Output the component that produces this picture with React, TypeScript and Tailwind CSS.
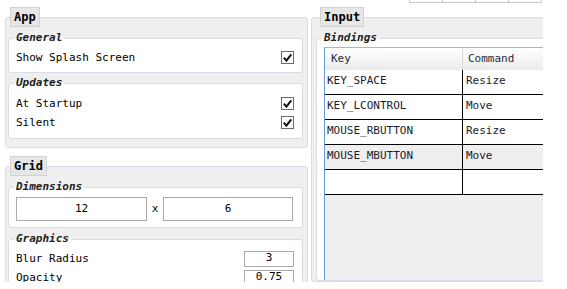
import type { ReactNode } from 'react';

const mono = "font-['DejaVu_Sans_Mono',monospace]";

function Check() {
  return (
    <svg width="13" height="13" viewBox="0 0 13 13" className="shrink-0">
      <rect x="0.5" y="0.5" width="12" height="12" fill="#fff" stroke="#6b6b6b" />
      <path d="M2.8 6.6 L5.4 9.6 L10.3 3.4" fill="none" stroke="#111" strokeWidth="2" />
    </svg>
  );
}

function Group({
  title,
  labelClass,
  className = '',
  boxClass = '',
  children,
}: {
  title: string;
  labelClass: string;
  className?: string;
  boxClass?: string;
  children: ReactNode;
}) {
  return (
    <div className={`relative pt-[10px] ${className}`}>
      <div className={`rounded-[3px] border border-[#d6dde5] bg-[#efefef] pt-[20px] ${boxClass}`}>
        {children}
      </div>
      {/* tab-like title over the border */}
      <span
        className={`absolute top-0 h-[20px] border border-[#d2d2d2] bg-[#e6e6e6] px-[3px] text-[12px] font-bold leading-[19px] text-black ${labelClass}`}
      >
        {title}
      </span>
    </div>
  );
}

function Section({
  title,
  className = '',
  children,
}: {
  title: string;
  className?: string;
  children: ReactNode;
}) {
  return (
    <div className={`relative rounded-[3px] border border-[#d6dde5] bg-white ${className}`}>
      <span className="absolute -top-[8px] left-[5px] bg-[linear-gradient(to_bottom,#efefef_50%,#ffffff_50%)] px-[2px] text-[11px] font-bold italic leading-[14px] text-[#222]">
        {title}
      </span>
      {children}
    </div>
  );
}

function Row({ label, children }: { label: string; children: ReactNode }) {
  return (
    <div className="flex h-[19px] items-center justify-between pl-[7px] pr-[8px] text-[11px] text-black">
      <span className="pt-[1px]">{label}</span>
      {children}
    </div>
  );
}

const bindings = [
  { key: 'KEY_SPACE', command: 'Resize', shade: false },
  { key: 'KEY_LCONTROL', command: 'Move', shade: false },
  { key: 'MOUSE_RBUTTON', command: 'Resize', shade: false },
  { key: 'MOUSE_MBUTTON', command: 'Move', shade: true },
  { key: '', command: '', shade: false },
];

export default function App() {
  return (
    <div className={`h-[289px] w-[567px] overflow-hidden bg-white ${mono}`}>
      <div className="flex h-[282px] overflow-hidden pl-[5px]">
        {/* Left column */}
        <div className="flex w-[303px] shrink-0 flex-col">
          <Group title="App" labelClass="left-[5px]" className="mt-[7px]" boxClass="pb-[8px] pl-[2px] pr-[4px]">
            <Section title="General" className="pb-[5px] pt-[9px]">
              <Row label="Show Splash Screen">
                <Check />
              </Row>
            </Section>
            <Section title="Updates" className="mt-[10px] pb-[6px] pt-[10px]">
              <Row label="At Startup">
                <Check />
              </Row>
              <Row label="Silent">
                <Check />
              </Row>
            </Section>
          </Group>

          <Group title="Grid" labelClass="left-[5px]" className="mt-[8px]" boxClass="pb-[8px] pl-[2px] pr-[4px]">
            <Section title="Dimensions" className="pb-[6px] pl-[7px] pt-[9px]">
              <div className="flex items-center text-[11px] text-black">
                <div className="flex h-[24px] w-[131px] items-center justify-center border border-[#a9a9a9] bg-white">
                  12
                </div>
                <span className="w-[16px] text-center">x</span>
                <div className="flex h-[24px] w-[130px] items-center justify-center border border-[#a9a9a9] bg-white">
                  6
                </div>
              </div>
            </Section>
            <Section title="Graphics" className="mt-[11px] pb-[6px] pt-[9px]">
              <Row label="Blur Radius">
                <div className="flex h-[16px] w-[50px] items-center justify-center border border-[#a9a9a9] bg-white">
                  3
                </div>
              </Row>
              <Row label="Opacity">
                <div className="flex h-[16px] w-[50px] items-center justify-center border border-[#a9a9a9] bg-white">
                  0.75
                </div>
              </Row>
            </Section>
          </Group>
        </div>

        {/* Right column */}
        <div className="ml-[3px] flex h-full w-[232px] shrink-0 flex-col overflow-hidden">
          {/* scrolled-off row at the top */}
          <div className="ml-[98px] flex h-[3px] border-l border-[#c8c8c8]">
            {[0, 1, 2, 3].map((i) => (
              <div key={i} className="h-[3px] w-[33px] shrink-0 border-b border-r border-[#c8c8c8] bg-white" />
            ))}
          </div>

          <div className="relative mt-[4px] flex flex-1 flex-col pt-[10px]">
            <div className="flex w-[300px] flex-1 flex-col rounded-[3px] border border-[#d6dde5] bg-[#efefef] pl-[4px] pt-[20px]">
              <div className="relative flex flex-1 flex-col rounded-[3px] border border-[#d6dde5] bg-white pl-[7px] pt-[8px]">
                <span className="absolute -top-[8px] left-[5px] bg-[linear-gradient(to_bottom,#efefef_50%,#ffffff_50%)] px-[2px] text-[11px] font-bold italic leading-[14px] text-[#222]">
                  Bindings
                </span>

                {/* Table */}
                <div className="flex flex-1 flex-col overflow-hidden border-l border-t border-l-[#6a9ad4] border-t-[#a7b6c9] bg-[#eeeeee] text-[11px]">
                  <div className="flex h-[22px] shrink-0 bg-gradient-to-b from-white to-[#ebebeb] text-[#1f2d3d]">
                    <div className="flex w-[138px] shrink-0 items-center border-r border-[#d8d8d8] pl-[6px] pt-[1px]">Key</div>
                    <div className="flex w-[200px] shrink-0 items-center pl-[5px] pt-[1px]">Command</div>
                  </div>
                  {bindings.map((b, i) => (
                    <div
                      key={i}
                      className={`flex h-[25px] shrink-0 border-b border-black leading-[14px] text-[#1a1a2a] ${
                        b.shade ? 'bg-[#efefef]' : 'bg-white'
                      }`}
                    >
                      <div className="w-[138px] shrink-0 border-r border-black pl-[2px] pt-[4px]">{b.key}</div>
                      <div className="w-[200px] shrink-0 pl-[3px] pt-[4px]">{b.command}</div>
                    </div>
                  ))}
                </div>
              </div>
            </div>
            <span className="absolute left-[9px] top-0 h-[20px] border border-[#d2d2d2] bg-[#e6e6e6] px-[3px] text-[12px] font-bold leading-[19px] text-black">
              Input
            </span>
          </div>
        </div>
      </div>
    </div>
  );
}
